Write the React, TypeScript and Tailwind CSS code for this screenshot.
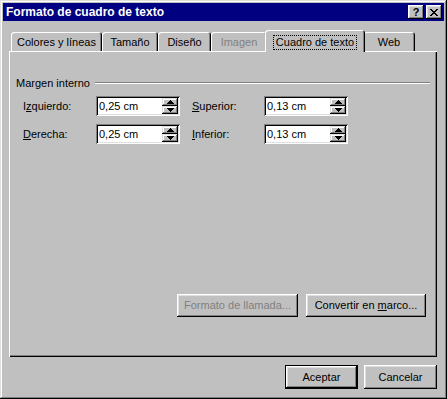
import React from 'react';

// classic 3d edges
const raised =
  'shadow-[inset_-1px_-1px_0_#000,inset_1px_1px_0_#fff,inset_-2px_-2px_0_#808080,inset_2px_2px_0_#dfdfdf]';
const smallRaised =
  'shadow-[inset_-1px_-1px_0_#000,inset_1px_1px_0_#dfdfdf,inset_-2px_-2px_0_#808080,inset_2px_2px_0_#fff]';

const tabs = [
  { label: 'Colores y líneas', w: 'w-[91px]' },
  { label: 'Tamaño', w: 'w-[56px]' },
  { label: 'Diseño', w: 'w-[53px]' },
  { label: 'Imagen', w: 'w-[56px]', disabled: true },
  { label: 'Cuadro de texto', w: 'w-[100px]', active: true },
  { label: 'Web', w: 'w-[52px]' },
];

const Arrow = ({ up }: { up?: boolean }) => (
  <svg width="7" height="4" viewBox="0 0 7 4" shapeRendering="crispEdges">
    {up ? (
      <path d="M3 0h1v1h1v1h1v1h1v1H0V3h1V2h1V1h1z" fill="#000" />
    ) : (
      <path d="M0 0h7v1H6v1H5v1H4v1H3V3H2V2H1V1H0z" fill="#000" />
    )}
  </svg>
);

const SpinBox = ({ value }: { value: string }) => (
  <div className="w-[84px] h-[20px] bg-white flex p-[2px] shadow-[inset_1px_1px_0_#808080,inset_-1px_-1px_0_#fff,inset_2px_2px_0_#000,inset_-2px_-2px_0_#dfdfdf]">
    <div className="flex-1 flex items-center pl-[1px] leading-none">{value}</div>
    <div className="w-[16px] flex flex-col">
      <div className={`h-[8px] bg-[#c0c0c0] flex items-center justify-center ${smallRaised}`}>
        <Arrow up />
      </div>
      <div className={`h-[8px] bg-[#c0c0c0] flex items-center justify-center ${smallRaised}`}>
        <Arrow />
      </div>
    </div>
  </div>
);

export default function App() {
  return (
    <div className="w-[447px] h-[399px] bg-[#c0c0c0] font-['Liberation_Sans',Arial,sans-serif] text-[11px] text-black p-[3px] flex flex-col shadow-[inset_-1px_-1px_0_#000,inset_1px_1px_0_#dfdfdf,inset_-2px_-2px_0_#808080,inset_2px_2px_0_#fff]">
      {/* title bar */}
      <div className="h-[18px] bg-[#000080] flex items-center justify-between pl-[3px] pr-[2px]">
        <span className="text-white font-bold text-[12px] leading-none">Formato de cuadro de texto</span>
        <div className="flex gap-[2px]">
          <div className={`w-[16px] h-[14px] bg-[#c0c0c0] flex items-center justify-center font-bold text-[11px] leading-none ${raised}`}>
            ?
          </div>
          <div className={`w-[16px] h-[14px] bg-[#c0c0c0] flex items-center justify-center ${raised}`}>
            <svg width="8" height="7" viewBox="0 0 8 7" shapeRendering="crispEdges">
              <path
                d="M0 0h2v1h1v1h2V1h1V0h2v1H7v1H6v1H5v1h1v1h1v1h1v1H6V6H5V5H3v1H2v1H0V6h1V5h1V4h1V3H2V2H1V1H0z"
                fill="#000"
              />
            </svg>
          </div>
        </div>
      </div>

      <div className="flex-1 flex flex-col pl-[6px] pr-[7px] pt-[9px] pb-[7px]">
        {/* tabs */}
        <div className="h-[21px] flex items-end pl-[2px]">
          {tabs.map((t) =>
            t.active ? (
              <div
                key={t.label}
                className={`${t.w} h-[22px] -mx-[2px] -mb-[1px] relative z-10 bg-[#c0c0c0] rounded-t-[3px] flex justify-center pt-[5px] shadow-[inset_1px_1px_0_#fff,inset_-1px_0_0_#000,inset_-2px_0_0_#808080]`}
              >
                <span className="h-[15px] px-[2px] border border-dotted border-black flex items-center leading-none">
                  {t.label}
                </span>
              </div>
            ) : (
              <div
                key={t.label}
                className={`${t.w} h-[19px] rounded-t-[3px] flex items-center justify-center pt-[1px] shadow-[inset_1px_1px_0_#fff,inset_-1px_0_0_#000,inset_-2px_0_0_#808080] ${t.disabled ? 'text-[#808080]' : ''}`}
              >
                {t.label}
              </div>
            )
          )}
        </div>

        {/* panel */}
        <div className="h-[306px] flex flex-col shadow-[inset_1px_1px_0_#fff,inset_-1px_-1px_0_#000,inset_-2px_-2px_0_#808080]">
          <div className="mt-[25px] h-[14px] flex items-center pl-[7px] pr-[7px]">
            <span className="leading-none">Margen interno</span>
            <div className="flex-1 ml-[5px] h-[2px] border-t border-[#808080] border-b border-b-white" />
          </div>

          <div className="mt-[6px] flex items-center pl-[14px]">
            <span className="w-[73px]">
              I<span className="underline">z</span>quierdo:
            </span>
            <SpinBox value="0,25 cm" />
            <span className="w-[72px] ml-[12px]">
              <span className="underline">S</span>uperior:
            </span>
            <SpinBox value="0,13 cm" />
          </div>

          <div className="mt-[8px] flex items-center pl-[14px]">
            <span className="w-[73px]">
              <span className="underline">D</span>erecha:
            </span>
            <SpinBox value="0,25 cm" />
            <span className="w-[72px] ml-[12px]">
              <span className="underline">I</span>nferior:
            </span>
            <SpinBox value="0,13 cm" />
          </div>

          <div className="mt-[150px] flex justify-end gap-[8px] pr-[11px]">
            <div className={`w-[121px] h-[23px] flex items-center justify-center text-[#808080] ${raised}`}>
              Formato de llamada...
            </div>
            <div className={`w-[120px] h-[23px] flex items-center justify-center ${raised}`}>
              <span>
                Convertir en <span className="underline">m</span>arco...
              </span>
            </div>
          </div>
        </div>

        {/* dialog buttons */}
        <div className="mt-[8px] flex justify-end gap-[6px]">
          <div className={`w-[73px] h-[24px] border border-black flex items-center justify-center ${raised}`}>
            Aceptar
          </div>
          <div className={`w-[73px] h-[24px] flex items-center justify-center ${raised}`}>Cancelar</div>
        </div>
      </div>
    </div>
  );
}
